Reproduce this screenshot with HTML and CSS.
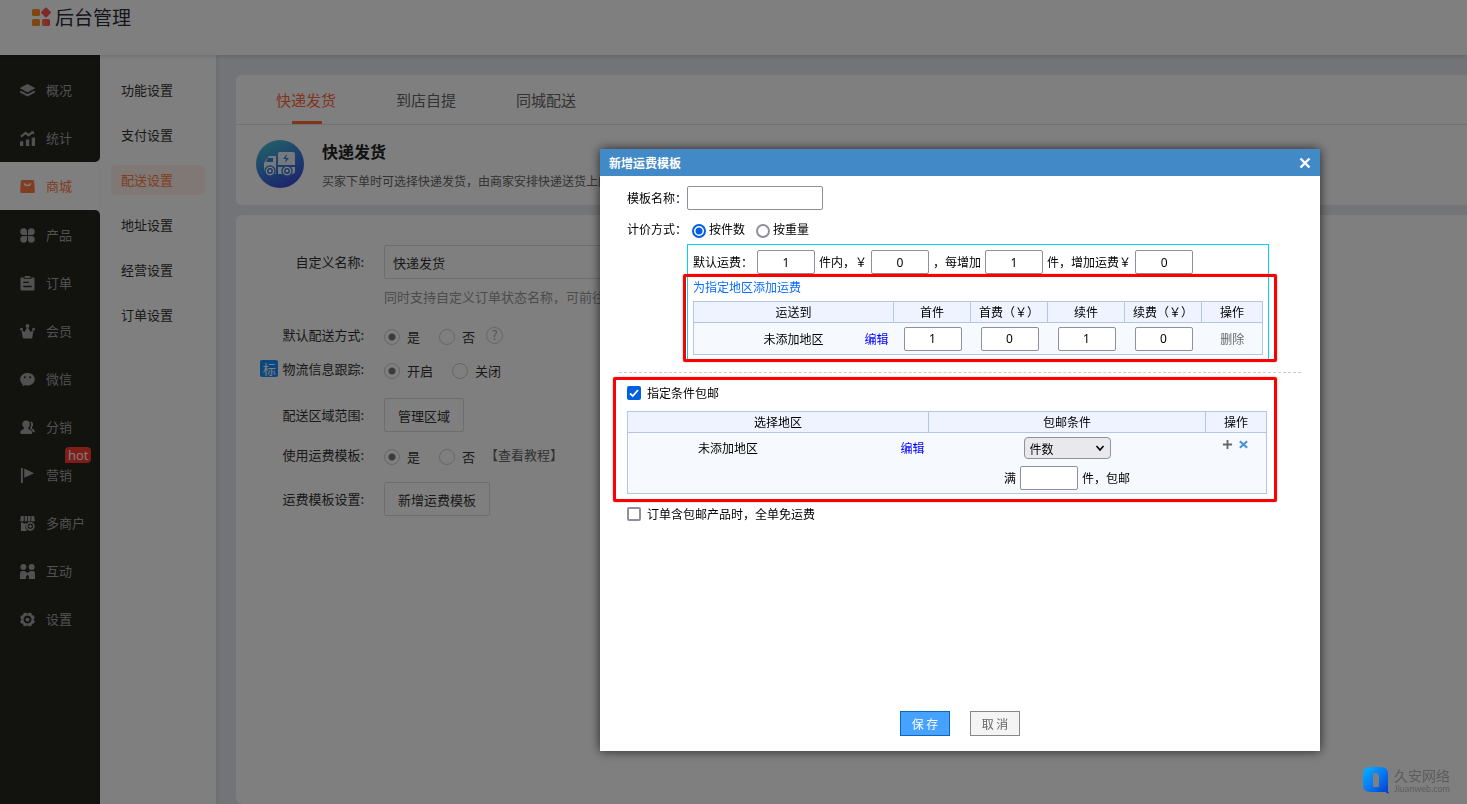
FILE: index.html
```html
<!DOCTYPE html>
<html lang="zh-CN">
<head>
  <meta charset="UTF-8">
  <meta name="viewport" content="width=device-width, initial-scale=1.0">
  <title>后台管理</title>
  <link rel="stylesheet" href="styles.css">
</head>
<body>
  <header class="top">
    <svg class="logo" viewBox="0 0 20 20">
      <defs><linearGradient id="lg" x1="0" x2="1"><stop offset="0" stop-color="#ff7a3e"/><stop offset="1" stop-color="#ff4d5a"/></linearGradient></defs>
      <rect x="1" y="2" width="8" height="7" rx="1.5" fill="#ff8f1f"/>
      <rect x="1" y="12" width="8" height="7" rx="1.5" fill="#ff8f1f"/>
      <rect x="11" y="12" width="8" height="7" rx="1.5" fill="url(#lg)"/>
      <rect x="11.200" y="1.700" width="7.600" height="7.600" rx="1" transform="rotate(45 15 5.500)" fill="#ff5358"/>
    </svg>
    <h1>后台管理</h1>
  </header>

  <div class="layout">
    <nav class="side">
      <div class="side-group side-first">
        <a href="#"><svg viewBox="0 0 16 16"><path d="M8 1.500 15.500 5.500 8 9.500.5 5.500z" stroke="currentColor" stroke-linejoin="round"/><path d="M1 9.500 8 13.200 15 9.500" fill="none" stroke="currentColor" stroke-width="2.200" stroke-linecap="round"/></svg>概况</a>
        <a href="#"><svg viewBox="0 0 16 16"><path d="M1 6 6 2l3 2.500L14 1" fill="none" stroke="currentColor" stroke-width="2.400"/><path d="M11.500.5H15V4z"/><rect x="0" y="11" width="3.500" height="5"/><rect x="6.300" y="9" width="3.500" height="7"/><rect x="12.500" y="7" width="3.500" height="9"/></svg>统计</a>
      </div>
      <a href="#" class="side-active"><svg viewBox="0 0 16 16"><path fill-rule="evenodd" d="M2.500 1h11q1.500 0 1.600 1.500l.7 10.500q0 2-2 2H2.200q-2 0-2-2L.9 2.500Q1 1 2.500 1zM4 4.500a4 3.200 0 0 0 8 0h-1.600a2.400 1.700 0 0 1-4.800 0z"/></svg>商城</a>
      <div class="side-group side-rest">
        <a href="#"><svg viewBox="0 0 16 16"><path d="M7.500 7.500H4A3.600 3.600 0 1 1 7.500 4zM8.500 7.500V4A3.600 3.600 0 1 1 12 7.500zM7.500 8.500V12A3.600 3.600 0 1 1 4 8.500zM8.500 8.500H12A3.600 3.600 0 1 1 8.500 12z"/></svg>产品</a>
        <a href="#"><svg viewBox="0 0 16 16"><path fill-rule="evenodd" d="M2 1.500h2v1.500h8V1.500h2q1.500 0 1.500 1.500v11q0 1.500-1.500 1.500H2Q.5 15.500.5 14V3Q.5 1.500 2 1.500zM3.500 6v1.500h6V6zM3.500 10.500V12h9v-1.500z"/><rect x="5" y="0" width="6" height="2"/></svg>订单</a>
        <a href="#"><svg viewBox="0 0 16 16"><path d="M1.500 6 4.800 8.500 8 3l3.200 5.500L14.500 6l-1.300 8q-.2 1.500-1.700 1.500h-7q-1.500 0-1.700-1.500z"/><circle cx="1.500" cy="5.500" r="1.500"/><circle cx="8" cy="2" r="2"/><circle cx="14.500" cy="5.500" r="1.500"/></svg>会员</a>
        <a href="#"><svg viewBox="0 0 16 16"><path fill-rule="evenodd" d="M8 1c4.400 0 7.800 2.900 7.800 6.700S12.400 14.400 8 14.400q-1.500 0-2.700-.4L2.500 15.300 2.800 13C1.200 11.700.2 9.800.2 7.700.2 3.900 3.600 1 8 1zM5.200 4.500a1.100 1.100 0 1 0 .01 0zM10.800 4.500a1.100 1.100 0 1 0 .01 0z"/></svg>微信</a>
        <a href="#"><svg viewBox="0 0 16 16"><circle cx="6.500" cy="4.500" r="4"/><path d="M4.500 7.500h4l.5 2q4 1.200 4 4 0 1.500-1.200 1.500H1.500Q.2 15 .2 13.500q0-2.800 3.800-4z"/><path d="M11 1.500q3 .5 3 3.300 0 1.700-1.200 2.700v1.500q3 1 3 3.300V13h-2q-.7-2.800-3.300-4.200Q13 5.500 11 1.500z"/></svg>分销</a>
        <a href="#"><svg viewBox="0 0 16 16"><rect x="1" y="0" width="2" height="16"/><path d="M4.500.5 15 5.500 4.500 10.500z"/></svg>营销<span class="hot">hot</span></a>
        <a href="#"><svg viewBox="0 0 16 16"><path d="M1 0h3v5.500H0zM5 0h2.700v5.500H5zM8.500 0h2.700v5.500H8.500zM12 0h3l1 5.500h-4zM1 7h2l1 1h4l-2 2q-1 3 1.500 6H1z"/><circle cx="11" cy="11" r="3.800" fill="none" stroke="currentColor" stroke-width="1.800"/><path d="M10.400 9h1.300v1.400H13v1.300h-1.300V13h-1.300v-1.300H9v-1.300h1.400z"/></svg>多商户</a>
        <a href="#"><svg viewBox="0 0 16 16"><circle cx="3.600" cy="3.300" r="3.200"/><circle cx="12.400" cy="3.300" r="3.200"/><path d="M0 10q0-2.500 2.500-2.500H5l3 2 3-2h2.500Q16 7.500 16 10v6H9.500v-3L8 11.500 6.500 13v3H0z"/></svg>互动</a>
        <a href="#"><svg viewBox="0 0 16 16"><path fill-rule="evenodd" d="M6 .5 8 1.800 10 .5l2.500 1 .2 2 2 .3 1.100 2.400L14.400 8l1.400 2-1.100 2.200-2 .3-.2 2-2.500 1L8 14.200 6 15.500l-2.500-1-.2-2-2-.3L.2 10l1.400-2L.2 6.200l1.100-2.400 2-.3.200-2zM8 3.800a4.200 4.200 0 1 0 .01 0z"/><circle cx="8" cy="8" r="2"/></svg>设置</a>
      </div>
    </nav>

    <nav class="sub">
      <a href="#">功能设置</a>
      <a href="#">支付设置</a>
      <a href="#" class="sub-active">配送设置</a>
      <a href="#">地址设置</a>
      <a href="#">经营设置</a>
      <a href="#">订单设置</a>
    </nav>

    <main>
      <section class="card">
        <div class="tabs">
          <a href="#" class="tab-active">快递发货</a>
          <a href="#">到店自提</a>
          <a href="#">同城配送</a>
        </div>
        <div class="intro">
          <svg class="truck" viewBox="0 0 48 48">
            <defs><linearGradient id="tg" x1="0.2" y1="0" x2="0.7" y2="1"><stop offset="0" stop-color="#48c2d0"/><stop offset="0.5" stop-color="#3a83d8"/><stop offset="1" stop-color="#3a48d8"/></linearGradient></defs>
            <circle cx="24" cy="24" r="24" fill="url(#tg)"/>
            <path fill="#fff" fill-opacity=".9" d="M23 12h14q2 0 2 2v11H22V13zM13 16h7v18H9v-3H8v-8zM22 27h17v4q0 3-3 3H22z"/>
            <path fill="#3a83d8" d="M12 18h5v4h-7zM31 14l-4 5h3l-1 4 4-5h-3z"/>
            <g fill="#fff" stroke="#3a83d8" stroke-width="1.500"><circle cx="14" cy="31" r="5"/><circle cx="31" cy="31" r="5"/></g>
            <g fill="none" stroke="#3a68d8" stroke-width="1.500"><circle cx="14" cy="31" r="2.200"/><circle cx="31" cy="31" r="2.200"/></g>
          </svg>
          <div>
            <h2>快递发货</h2>
            <p>买家下单时可选择快递发货，由商家安排快递送货上门。</p>
          </div>
        </div>
      </section>

      <section class="card form">
        <div class="row">
          <label class="name" for="custom">自定义名称:</label>
          <input type="text" id="custom" class="text" value="快递发货">
        </div>
        <p class="hint">同时支持自定义订单状态名称，可前往订单设置</p>
        <div class="row row-radio">
          <span class="name">默认配送方式:</span>
          <label><input type="radio" name="def" checked>是</label>
          <label><input type="radio" name="def">否</label>
          <button class="help" aria-label="帮助">?</button>
        </div>
        <div class="row row-radio">
          <span class="name"><b class="mark">标</b>物流信息跟踪:</span>
          <label><input type="radio" name="track" checked>开启</label>
          <label><input type="radio" name="track">关闭</label>
        </div>
        <div class="row row-btn">
          <span class="name">配送区域范围:</span>
          <button class="btn">管理区域</button>
        </div>
        <div class="row row-radio row-tpl">
          <span class="name">使用运费模板:</span>
          <label><input type="radio" name="tpl" checked>是</label>
          <label><input type="radio" name="tpl">否</label>
          <a href="#" class="guide">【查看教程】</a>
        </div>
        <div class="row row-btn">
          <span class="name">运费模板设置:</span>
          <button class="btn">新增运费模板</button>
        </div>
      </section>
    </main>
  </div>

  <div class="mask"></div>

  <div class="modal" role="dialog" aria-label="新增运费模板">
    <div class="modal-title">
      <h3>新增运费模板</h3>
      <button class="close" aria-label="关闭"><svg viewBox="0 0 12 12"><path d="M1.500 1.500l9 9M10.500 1.500l-9 9" stroke="#fff" stroke-width="2.400"/></svg></button>
    </div>

    <div class="modal-body">
      <div class="line">
        <label for="tplname">模板名称：</label>
        <input type="text" id="tplname" class="box-input tpl-name">
      </div>
      <div class="line line-type">
        <span>计价方式：</span>
        <label><input type="radio" name="type" checked>按件数</label>
        <label><input type="radio" name="type">按重量</label>
      </div>

      <div class="fee">
        <div class="fee-default">
          <label for="f1">默认运费：</label><input type="text" id="f1" class="box-input num" value="1">
          <label for="f2">件内，￥</label><input type="text" id="f2" class="box-input num" value="0">
          <label for="f3">，每增加</label><input type="text" id="f3" class="box-input num" value="1">
          <label for="f4">件，增加运费￥</label><input type="text" id="f4" class="box-input num" value="0">
        </div>
        <a href="#" class="add-area">为指定地区添加运费</a>
        <table class="fee-table">
          <thead>
            <tr><th class="col-area">运送到</th><th>首件</th><th>首费（￥）</th><th>续件</th><th>续费（￥）</th><th class="col-op">操作</th></tr>
          </thead>
          <tbody>
            <tr>
              <td><div class="area"><span>未添加地区</span><a href="#">编辑</a></div></td>
              <td><input type="text" class="box-input num" value="1" aria-label="首件"></td>
              <td><input type="text" class="box-input num" value="0" aria-label="首费"></td>
              <td><input type="text" class="box-input num" value="1" aria-label="续件"></td>
              <td><input type="text" class="box-input num" value="0" aria-label="续费"></td>
              <td><a href="#" class="del">删除</a></td>
            </tr>
          </tbody>
        </table>
        <div class="frame frame-fee"></div>
      </div>

      <div class="free">
        <label class="check"><input type="checkbox" checked>指定条件包邮</label>
        <table class="free-table">
          <thead>
            <tr><th class="col-place">选择地区</th><th>包邮条件</th><th class="col-op">操作</th></tr>
          </thead>
          <tbody>
            <tr>
              <td><div class="area"><span>未添加地区</span><a href="#">编辑</a></div></td>
              <td>
                <select aria-label="包邮条件"><option>件数</option></select>
                <div class="full"><label for="full">满</label><input type="text" id="full" class="box-input num"><span>件，包邮</span></div>
              </td>
              <td>
                <div class="ops">
                  <button aria-label="添加"><svg viewBox="0 0 12 12"><path d="M6 1v10M1 6h10" stroke="#666" stroke-width="2"/></svg></button>
                  <button aria-label="移除"><svg viewBox="0 0 12 12"><path d="M2 2.500l8 7M10 2.500l-8 7" stroke="#4a94d6" stroke-width="2.400"/></svg></button>
                </div>
              </td>
            </tr>
          </tbody>
        </table>
        <div class="frame frame-free"></div>
      </div>

      <label class="check"><input type="checkbox">订单含包邮产品时，全单免运费</label>
    </div>

    <div class="modal-foot">
      <button class="save">保 存</button>
      <button class="cancel">取 消</button>
    </div>
  </div>

  <div class="brand">
    <svg viewBox="0 0 26 27">
      <defs><linearGradient id="bg" x1="0" y1="0" x2="1" y2="1"><stop offset="0" stop-color="#00b4ff"/><stop offset="0.5" stop-color="#0a78f0"/><stop offset="1" stop-color="#0038c8"/></linearGradient></defs>
      <path fill="url(#bg)" fill-rule="evenodd" d="M7 0h11q7 0 7 7v17l1 3-4-2H7q-7 0-7-7V7q0-7 7-7zM11 6q-1 0-1 1v12q0 1 1 1h4q1 0 1-1V9l-2-3z"/>
    </svg>
    <div>
      <strong>久安网络</strong>
      <span>Jiuanweb.com</span>
    </div>
  </div>
</body>
</html>
```

FILE: styles.css
```css
* { box-sizing: border-box; }
body { margin: 0; height: 100vh; overflow: hidden; display: flex; flex-direction: column; font-family: "Noto Sans CJK SC", sans-serif; font-size: 13px; line-height: 20px; color: #333; background: #e6e9ee; }
h1, h2, h3, p { margin: 0; }
a { color: inherit; text-decoration: none; }
button, input, select { font-family: inherit; font-size: inherit; color: inherit; margin: 0; }
button { padding: 0; cursor: pointer; }

/* header */
.top { height: 55px; flex: none; display: flex; align-items: flex-start; gap: 4px; padding: 7px 31px; background: #fff; box-shadow: 0 1px 4px rgba(0,0,0,0.15); position: relative; z-index: 1; }
.top h1 { font-size: 19px; line-height: 20px; font-weight: 400; color: #2a2a38; }
.logo { width: 20px; height: 20px; }
.layout { flex: 1; display: flex; min-height: 0; }

/* left menu */
.side { width: 100px; flex: none; display: flex; flex-direction: column; background: #fff; color: #a2a2a2; }
.side a { display: flex; align-items: center; gap: 11px; height: 48px; padding-left: 20px; position: relative; }
.side svg { width: 15px; height: 15px; fill: currentColor; }
.side-group { background: #24241f; }
.side-first { padding-top: 11px; border-bottom-right-radius: 5px; }
.side-rest { flex: 1; padding-top: 1px; border-top-right-radius: 5px; }
.side .side-active { color: #ff7a45; }
.hot { position: absolute; left: 65px; top: -4px; height: 16px; padding: 0 3px; border-radius: 4px 4px 4px 0; font-family: "Open Sans", sans-serif; font-size: 13px; line-height: 16px; color: #fff; background: #ff3a33; }

.sub { width: 116px; flex: none; display: flex; flex-direction: column; gap: 15px; padding: 20px 11px; background: #fff; box-shadow: 1px 0 4px rgba(0,0,0,0.08); }
.sub a { height: 30px; padding-left: 10px; line-height: 30px; border-radius: 5px; }
.sub .sub-active { color: #ff7a45; background: #fff0ea; }

/* content */
main { flex: 1; min-width: 0; display: flex; flex-direction: column; gap: 10px; padding: 20px 0 0 20px; }
.card { background: #fff; border-radius: 6px 0 0 6px; }
.tabs { display: flex; gap: 60px; height: 50px; padding-left: 40px; border-bottom: 1px solid #e4e4e4; font-size: 15px; line-height: 50px; color: #666; }
.tabs a { position: relative; }
.tab-active { color: #ff6a3c; }
.tab-active::after { content: ""; position: absolute; left: 16px; bottom: 0; width: 30px; height: 3px; background: #ff6a3c; }
.intro { display: flex; gap: 18px; padding: 15px 20px; height: 80px; }
.truck { width: 48px; height: 48px; }
.intro h2 { font-size: 16px; line-height: 22px; color: #222; }
.intro p { margin-top: 9px; font-size: 12px; line-height: 20px; color: #666; }

.form { flex: 1; padding: 30px 0 0 20px; }
.row { display: flex; align-items: center; min-height: 34px; color: #333; }
.row .name { width: 108px; margin-right: 20px; text-align: right; white-space: nowrap; flex: none; }
.text { width: 300px; height: 34px; padding: 0 8px; border: 1px solid #dcdcdc; border-radius: 2px; background: #fff; }
.hint { margin: 8px 0 11px 128px; color: #999; white-space: nowrap; }
.row-radio label { display: flex; align-items: center; margin-top: 3px; margin-right: 19px; }
.row-radio input { appearance: none; width: 16px; height: 16px; margin-right: 7px; border: 1px solid #ccc; border-radius: 50%; }
.row-radio input:checked { background: radial-gradient(circle, #777 3px, transparent 4px); }
.help { width: 17px; height: 17px; margin-left: -8px; border: 1px solid #c8c8c8; border-radius: 50%; background: none; line-height: 14px; color: #aaa; }
.mark { display: inline-block; width: 18px; margin-right: 4px; border-radius: 2px; font-weight: 400; line-height: 17px; text-align: center; color: #fff; background: #1890ff; }
.row-btn { margin-top: 12px; }
.row-tpl { margin-top: 6px; }
.row-tpl + .row-btn { margin-top: 10px; }
.btn { height: 34px; padding: 0 13px; border: 1px solid #dcdcdc; border-radius: 2px; background: #fff; }
.guide { margin-left: -9px; color: #666; }

.mask { position: fixed; inset: 0; z-index: 2; background: rgba(0,0,0,0.5); }

/* dialog */
.modal { position: fixed; z-index: 3; left: 600px; top: 149px; width: 720px; background: #fff; box-shadow: 0 0 10px rgba(0,0,0,0.7); font-size: 12px; line-height: 18px; color: #000; }
.modal-title { display: flex; justify-content: space-between; align-items: center; height: 27px; padding: 0 9px; color: #fff; background: #4189c7; }
.modal-title h3 { font-size: 12px; line-height: 16px; }
.close { width: 12px; height: 12px; border: 0; background: none; }
.close svg { display: block; }
.modal-body { min-height: 575px; padding: 10px 27px 0; }
.modal a { color: #00f; }
.line { display: flex; align-items: center; }
.line-type { height: 34px; padding-top: 4px; }
.line-type label { display: flex; align-items: center; gap: 3px; margin-right: 11px; }
.line-type label:nth-child(2) { margin-left: 5px; }
.box-input { height: 24px; padding: 0 3px; border: 1px solid #8f8f9d; border-radius: 2px; background: #fff; }
.tpl-name { width: 136px; }
.num { width: 58px; text-align: center; font-family: "Noto Sans", sans-serif; }
.modal input[type="radio"] { appearance: none; width: 14px; height: 14px; margin-top: 3px; border: 2px solid #8f8f9d; border-radius: 50%; }
.modal input[type="radio"]:checked { border-color: #0060df; background: radial-gradient(circle, #0060df 3px, #fff 4px); }

.fee { position: relative; width: 582px; height: 117px; margin-left: 60px; padding: 5px; border: 1px solid #00d2ff; }
.fee-default { display: flex; align-items: center; gap: 4px; white-space: nowrap; }
.modal .add-area { display: block; margin: 4px 0 5px; color: #0a6cff; }
table { border-collapse: collapse; table-layout: fixed; width: 100%; background: #f6faff; }
th, td { height: 32px; padding: 0; border: 1px solid #b4c6e8; text-align: center; }
th { height: 21px; font-weight: 400; background: #eef3ff; }
td { border-left: 0; border-right: 0; }
td:first-child { border-left: 1px solid #b4c6e8; }
td:last-child { border-right: 1px solid #b4c6e8; }
.col-area { width: 200px; }
.col-op { width: 61px; }
.fee-table td { padding-left: 1px; }
.fee-table .area { display: flex; justify-content: flex-end; gap: 41px; padding-right: 5px; }
.modal .del { color: #666; }

/* red frames marking the two regional sections */
.frame { position: absolute; border: 3px solid #f00; border-radius: 2px; pointer-events: none; box-shadow: 0 0 1px #f00; }
.frame-fee { left: -5px; right: -9px; top: 29px; bottom: -2px; }
.frame-free { left: 5px; right: 24px; top: 5px; bottom: 1px; }

.free { position: relative; margin: 11px -8px 2px -19px; padding: 12px 34px 9px 19px; }
.free::before { content: ""; position: absolute; left: 11px; right: 0; top: 0; border-top: 1px dashed #ccc; }
.check { display: flex; align-items: center; gap: 6px; height: 18px; }
.check input { appearance: none; width: 14px; height: 14px; border: 2px solid #8f8f9d; border-radius: 2px; }
.check input:checked { border-color: #0060df; background: #0060df url("data:image/svg+xml,%3Csvg xmlns='http://www.w3.org/2000/svg' viewBox='0 0 10 10'%3E%3Cpath d='M1 5.500l2.800 2.500L9 2' fill='none' stroke='white' stroke-width='1.800'/%3E%3C/svg%3E"); }
.free-table { margin-top: 9px; }
.free-table td { height: 61px; padding-top: 4px; vertical-align: top; }
.col-place { width: 301px; }
.free-table .area { display: flex; justify-content: space-between; padding: 2px 4px 0 70px; }
select { display: block; width: 87px; height: 22px; margin: 0 auto 7px; }
.modal select { appearance: none; margin: 0 auto 7px; padding: 0 5px; border: 1px solid #8f8f9d; border-radius: 4px; background: #e9e9ed url("data:image/svg+xml,%3Csvg xmlns='http://www.w3.org/2000/svg' viewBox='0 0 10 10'%3E%3Cpath d='M1.500 3l3.500 4L8.500 3' fill='none' stroke='black' stroke-width='1.600'/%3E%3C/svg%3E") no-repeat right 5px center / 10px 10px; }
.full { display: flex; justify-content: center; align-items: center; gap: 4px; }
.ops { display: flex; justify-content: center; gap: 5px; padding-top: 2px; }
.ops button { width: 11px; height: 11px; border: 0; background: none; }
.ops svg { display: block; }

.modal-foot { position: absolute; left: 0; right: 0; bottom: 15px; display: flex; justify-content: center; gap: 20px; }
.modal-foot button { width: 50px; height: 25px; border: 1px solid #888; color: #666; background: #f4f4f4; }
.modal-foot .save { border-color: #0a68b8; color: #fff; background: #47a1ff; }

.brand { position: fixed; z-index: 3; right: 17px; bottom: 10px; display: flex; gap: 5px; align-items: center; color: #5c5c5c; }
.brand svg { width: 26px; height: 27px; }
.brand div { display: flex; flex-direction: column; }
.brand strong { font-size: 14px; line-height: 18px; font-weight: 400; }
.brand span { font-family: Lato, sans-serif; font-size: 9px; line-height: 10px; }
```
